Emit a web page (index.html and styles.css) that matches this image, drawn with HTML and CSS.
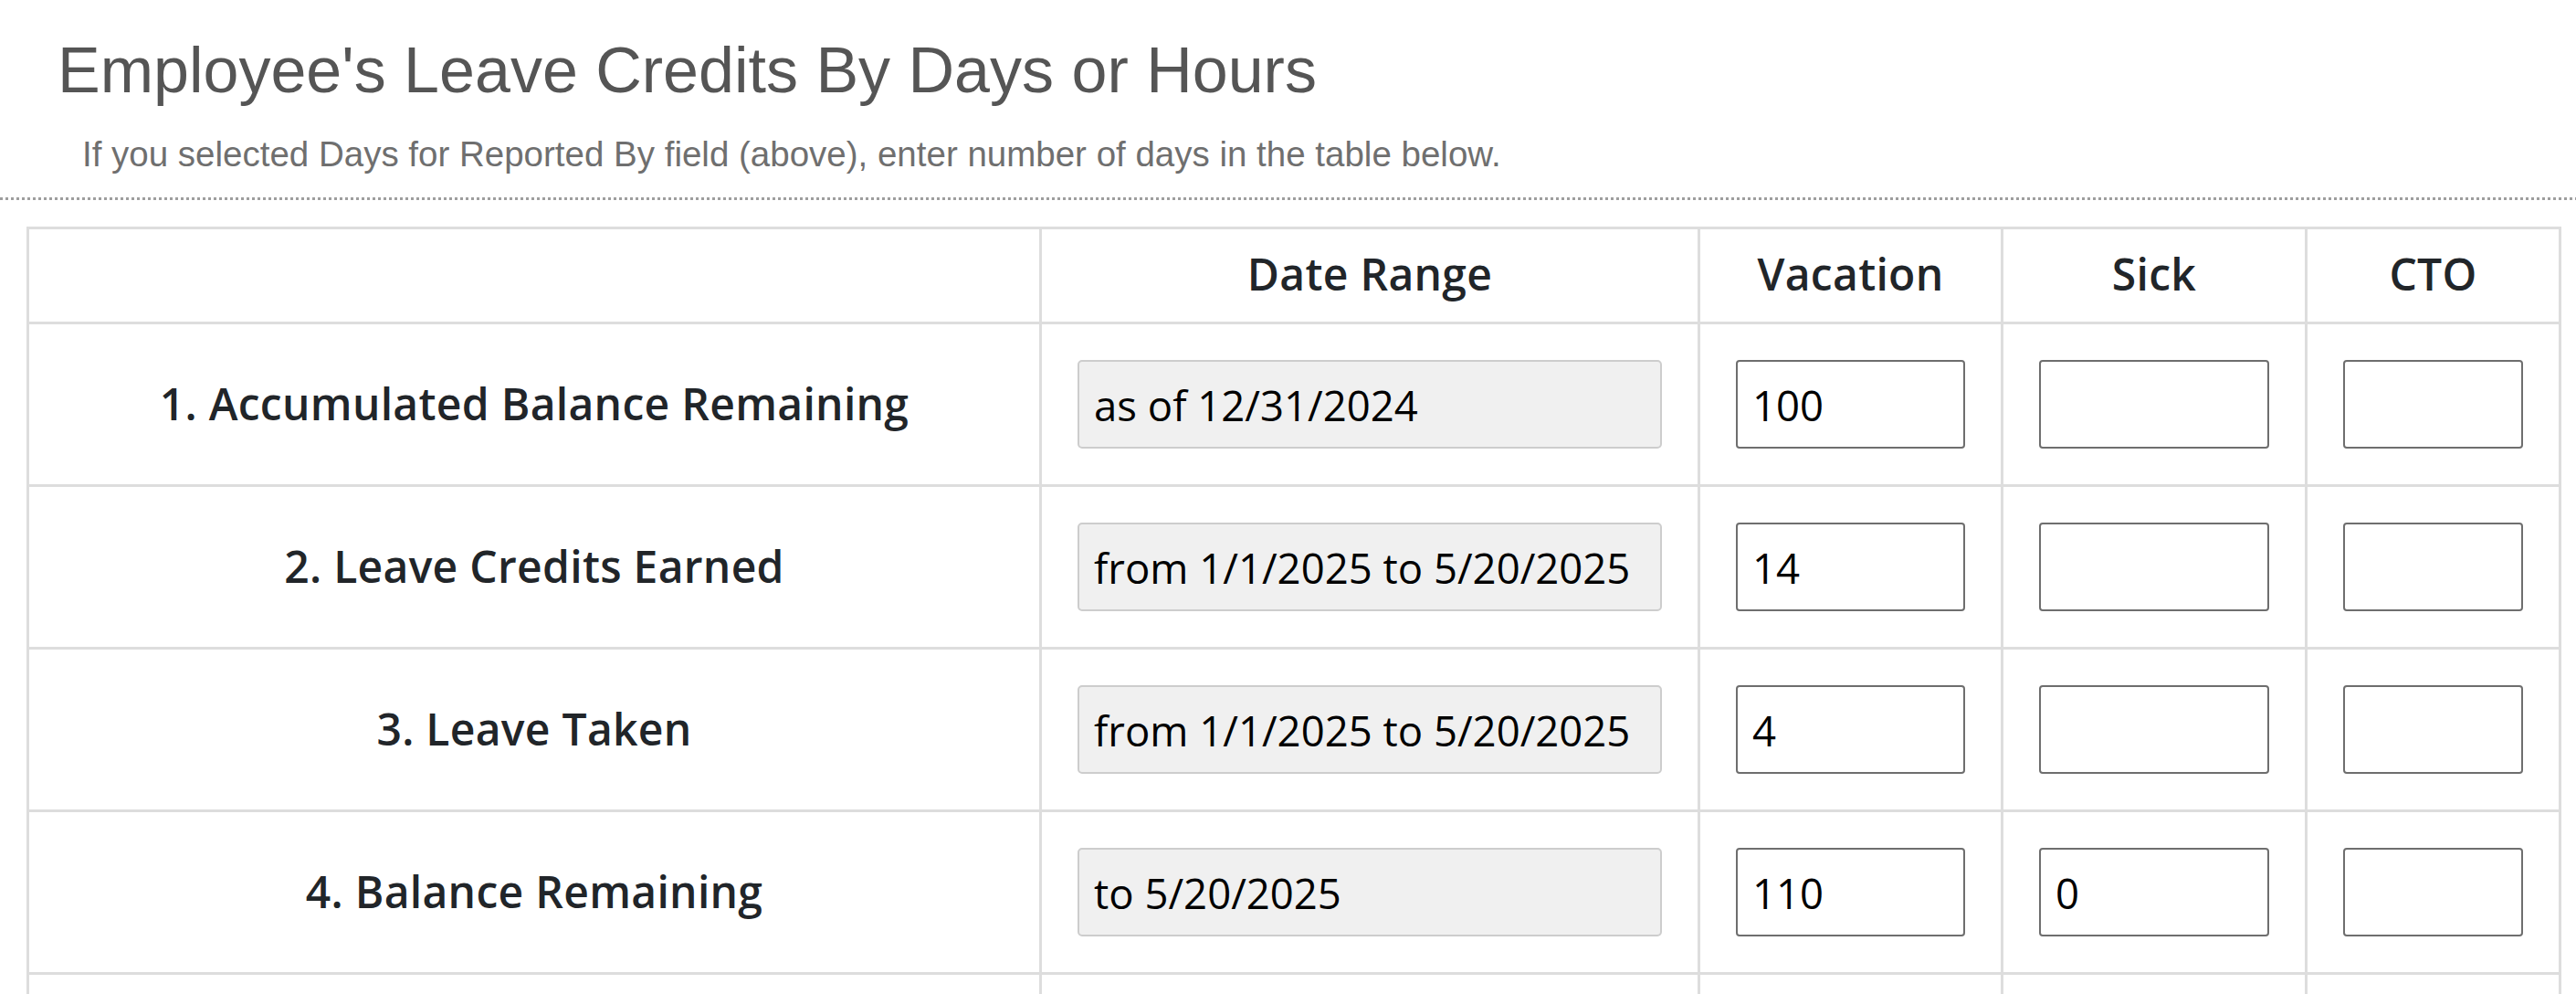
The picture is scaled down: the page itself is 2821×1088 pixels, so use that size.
FILE: index.html
```html
<!DOCTYPE html>
<html lang="en">
<head>
<meta charset="utf-8">
<title>Employee's Leave Credits</title>
<link rel="stylesheet" href="styles.css">
</head>
<body>
<header class="section-head">
  <h2 class="section-title">Employee's Leave Credits By Days or Hours</h2>
  <p class="section-note">If you selected Days for Reported By field (above), enter number of days in the table below.</p>
</header>
<div class="divider"></div>
<div class="credits" role="table">
  <div class="cell head"></div>
  <div class="cell head">Date Range</div>
  <div class="cell head">Vacation</div>
  <div class="cell head">Sick</div>
  <div class="cell head">CTO</div>

  <div class="cell label">1. Accumulated Balance Remaining</div>
  <div class="cell"><input class="field field-date" type="text" value="as of 12/31/2024" readonly></div>
  <div class="cell"><input class="field" type="text" value="100"></div>
  <div class="cell"><input class="field" type="text" value=""></div>
  <div class="cell"><input class="field" type="text" value=""></div>

  <div class="cell label">2. Leave Credits Earned</div>
  <div class="cell"><input class="field field-date" type="text" value="from 1/1/2025 to 5/20/2025" readonly></div>
  <div class="cell"><input class="field" type="text" value="14"></div>
  <div class="cell"><input class="field" type="text" value=""></div>
  <div class="cell"><input class="field" type="text" value=""></div>

  <div class="cell label">3. Leave Taken</div>
  <div class="cell"><input class="field field-date" type="text" value="from 1/1/2025 to 5/20/2025" readonly></div>
  <div class="cell"><input class="field" type="text" value="4"></div>
  <div class="cell"><input class="field" type="text" value=""></div>
  <div class="cell"><input class="field" type="text" value=""></div>

  <div class="cell label">4. Balance Remaining</div>
  <div class="cell"><input class="field field-date" type="text" value="to 5/20/2025" readonly></div>
  <div class="cell"><input class="field" type="text" value="110"></div>
  <div class="cell"><input class="field" type="text" value="0"></div>
  <div class="cell"><input class="field" type="text" value=""></div>

  <div class="cell label"></div>
  <div class="cell"></div>
  <div class="cell"></div>
  <div class="cell"></div>
  <div class="cell"></div>
</div>
</body>
</html>
```

FILE: styles.css
```css
html, body {
  margin: 0;
  padding: 0;
  background: #ffffff;
}

body {
  font-family: "Open Sans", "Liberation Sans", Arial, sans-serif;
  color: #212529;
}

.section-head {
  padding: 35px 0 24px 63px;
}

.section-title {
  margin: 0;
  font-family: "Liberation Sans", Arial, sans-serif;
  font-weight: 400;
  font-size: 70px;
  line-height: 84px;
  color: #555555;
}

.section-note {
  margin: 27px 0 0 27px;
  font-family: "Liberation Sans", Arial, sans-serif;
  font-size: 38.5px;
  line-height: 46px;
  color: #6f6f6f;
}

.divider {
  height: 3px;
  background: repeating-linear-gradient(to right, #9e9e9e 0 3px, transparent 3px 6px);
}

.credits {
  margin: 29px 0 0 29px;
  width: 2776px;
  box-sizing: border-box;
  display: grid;
  grid-template-columns: 1106px 718px 329px 330px 275px;
  grid-template-rows: 101px repeat(5, 175px);
  gap: 3px;
  padding: 3px;
  background: #dddddd;
}

.cell {
  background: #ffffff;
  display: flex;
  align-items: center;
  justify-content: center;
  padding: 0 39px;
  box-sizing: border-box;
  min-width: 0;
}

.head,
.label {
  font-size: 48px;
  letter-spacing: 0.3px;
  font-weight: 600;
  color: #212529;
  text-align: center;
}

.head {
  padding-bottom: 4px;
}

.label {
  padding-bottom: 2px;
}

.field {
  width: 100%;
  height: 97px;
  box-sizing: border-box;
  margin: 0;
  padding: 0 16px;
  font-family: "Open Sans", "Liberation Sans", Arial, sans-serif;
  font-size: 45.5px;
  color: #000000;
  background: #ffffff;
  border: 2px solid #6e6e6e;
  border-radius: 4px;
  outline: none;
}

.field-date {
  background: #f0f0f0;
  border-color: #cdcdcd;
  border-radius: 5px;
}
```
